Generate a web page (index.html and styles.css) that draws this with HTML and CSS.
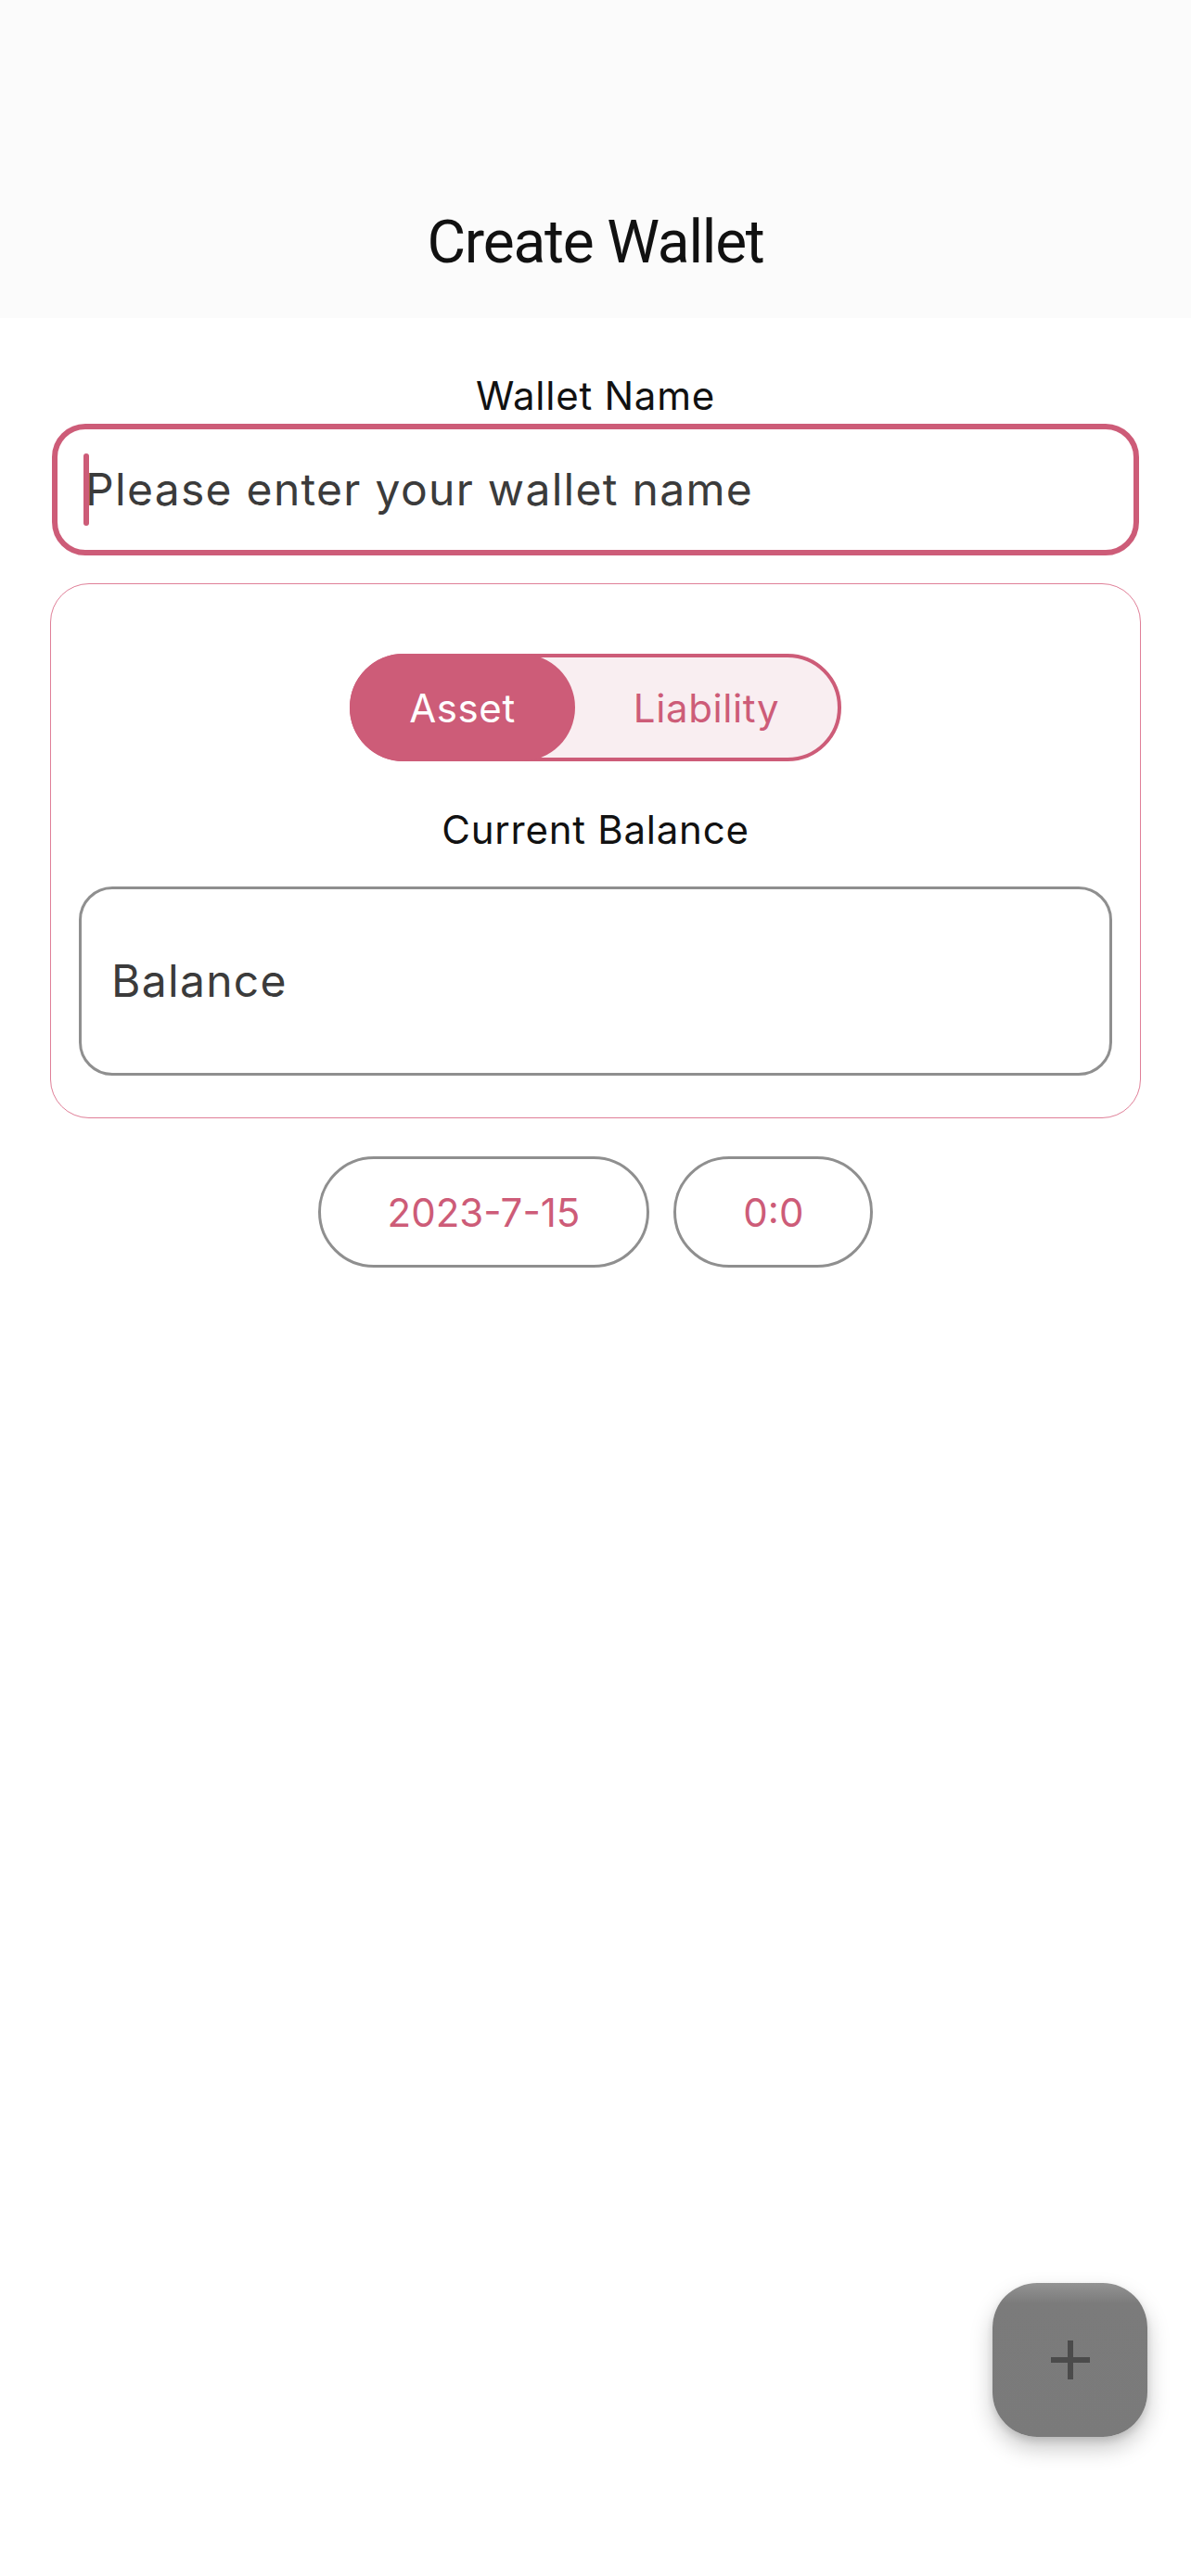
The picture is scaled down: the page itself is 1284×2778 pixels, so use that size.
FILE: index.html
```html
<!DOCTYPE html>
<html lang="en">
  <head>
    <meta charset="utf-8">
    <title>Create Wallet</title>
    <meta name="viewport" content="width=device-width">
    <link rel="stylesheet" href="styles.css">
  </head>
  <body>
    <header class="app-bar">
      <h1>Create Wallet</h1>
    </header>
    <main class="form">
      <div class="field-label">Wallet Name</div>
      <div class="text-field focused">
        <span class="caret"></span>
        <span class="hint">Please enter your wallet name</span>
      </div>
      <section class="card">
        <div class="toggle">
          <span class="seg on">Asset</span>
          <span class="seg off">Liability</span>
        </div>
        <div class="field-label balance-label">Current Balance</div>
        <div class="text-field balance">
          <span class="hint">Balance</span>
        </div>
      </section>
      <div class="when">
        <button class="pill">2023-7-15</button>
        <button class="pill">0:0</button>
      </div>
    </main>
    <button class="fab" aria-label="Add">
      <svg width="72" height="72" viewBox="0 0 24 24"><path d="M19 13h-6v6h-2v-6H5v-2h6V5h2v6h6v2z" fill="#4b4b4b"/></svg>
    </button>
  </body>
</html>
```

FILE: styles.css
```css
html, body {
    margin: 0;
    background: #fff;
}
body {
    width: 1284px;
    min-height: 2778px;
    font-family: Inter, "Noto Sans", sans-serif;
    color: #111;
}

.app-bar {
    box-sizing: border-box;
    height: 343px;
    padding-top: 230px;
    background: #fbfbfb;
}
.app-bar h1 {
    margin: 0;
    font-family: Roboto, "Noto Sans", sans-serif;
    font-size: 64px;
    line-height: 64px;
    font-weight: 400;
    letter-spacing: -1.2px;
    text-align: center;
    color: #111;
}

.form {
    padding: 0 54px;
}
.field-label {
    font-size: 42px;
    line-height: 42px;
    letter-spacing: 0.75px;
    text-align: center;
    margin-top: 63px;
}

.text-field {
    position: relative;
    display: flex;
    align-items: center;
    box-sizing: border-box;
    border-radius: 36px;
}
.text-field .hint {
    font-size: 48px;
    line-height: 48px;
    letter-spacing: 1.3px;
    color: #3b3b3b;
}
.text-field.focused {
    height: 142px;
    margin: 9px 2px 0;
    border: 6px solid #cd5c78;
    padding-left: 30px;
}
.caret {
    position: absolute;
    left: 28px;
    top: 26px;
    width: 6px;
    height: 78px;
    border-radius: 3px;
    background: #cd5c78;
}

.card {
    margin-top: 30px;
    border: 1px solid #e07f98;
    border-radius: 42px;
    padding: 75px 30px 45px;
}
.toggle {
    display: flex;
    width: 530px;
    height: 116px;
    box-sizing: border-box;
    margin: 0 auto;
    border: 4px solid #cd5c78;
    border-radius: 58px;
    background: #f9eef1;
    font-size: 42px;
    letter-spacing: 0.6px;
}
.seg {
    display: flex;
    align-items: center;
    justify-content: center;
}
.seg.on {
    width: 243px;
    height: 116px;
    margin: -4px 0 -4px -4px;
    border-radius: 58px;
    background: #cd5c78;
    color: #fff;
}
.seg.off {
    flex: 1;
    color: #cd5c78;
}
.balance-label {
    margin-top: 53px;
}
.text-field.balance {
    height: 204px;
    margin-top: 40px;
    border: 3px solid #8f8f8f;
    padding-left: 32px;
}

.when {
    display: flex;
    justify-content: center;
    gap: 26px;
    margin-top: 41px;
}
.pill {
    height: 120px;
    padding: 0 72px;
    border: 3px solid #8f8f8f;
    border-radius: 60px;
    background: #fff;
    font-family: Inter, "Noto Sans", sans-serif;
    font-size: 42px;
    letter-spacing: 0;
    color: #cd5c78;
}

.fab {
    position: fixed;
    right: 47px;
    bottom: 150px;
    width: 167px;
    height: 166px;
    display: flex;
    align-items: center;
    justify-content: center;
    border: 0;
    border-radius: 48px;
    background: linear-gradient(#939393, #7b7b7b 22px, #7a7a7a);
    box-shadow: 0 12px 24px rgba(0, 0, 0, 0.22), 0 4px 8px rgba(0, 0, 0, 0.12);
    padding: 0;
}
```
